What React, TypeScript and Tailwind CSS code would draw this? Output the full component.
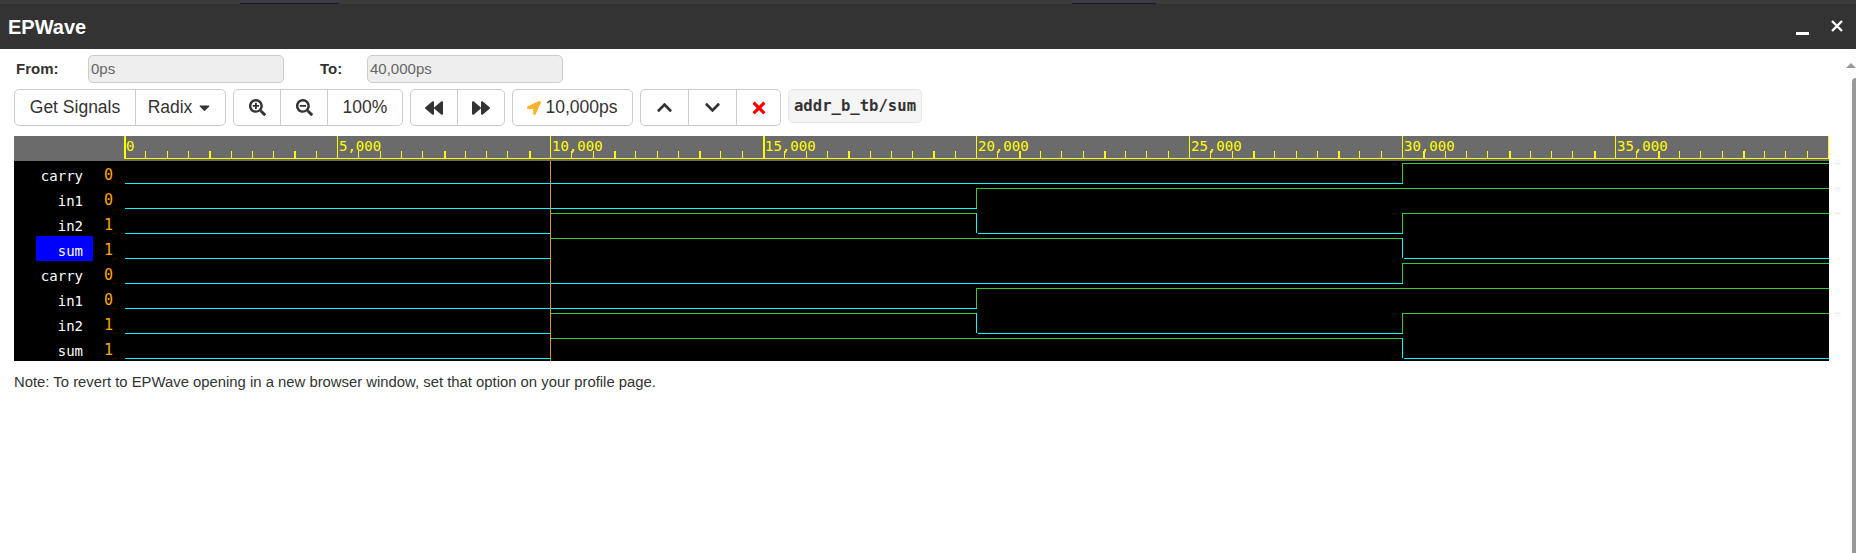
import { ReactNode } from 'react';
import {
	FaBackward,
	FaCaretDown,
	FaChevronDown,
	FaChevronUp,
	FaForward,
	FaLocationArrow,
	FaSearchMinus,
	FaSearchPlus,
	FaTimes,
} from 'react-icons/fa';

const CYAN = '#00ffff';
const GREEN = '#32cd32';
const MAJOR = 213;
const MINOR = 21.3;

// thick ticks don't fall on an even period in the picture, so they are listed
const THICK_TICKS = [4, 8, 15, 19, 23, 27, 34, 38, 42, 46, 53, 57, 61, 65, 69, 72, 76];

const signals = [
	{ name: 'carry', value: '0', edges: [[6, 1]] },
	{ name: 'in1', value: '0', edges: [[4, 1]] },
	{ name: 'in2', value: '1', edges: [[2, 1], [4, 0], [6, 1]] },
	{ name: 'sum', value: '1', edges: [[2, 1], [6, 0]], selected: true },
	{ name: 'carry', value: '0', edges: [[6, 1]] },
	{ name: 'in1', value: '0', edges: [[4, 1]] },
	{ name: 'in2', value: '1', edges: [[2, 1], [4, 0], [6, 1]] },
	{ name: 'sum', value: '1', edges: [[2, 1], [6, 0]] },
];

const Ruler = () => (
	<svg width={1706} height={25} className="block" shapeRendering="crispEdges">
		<rect x={0} y={22} width={1705} height={1} fill="#ffff00" />
		{Array.from({ length: 81 }, (_, k) => {
			if (k % 10 === 0) return null;
			const thick = THICK_TICKS.includes(k);
			return <rect key={k} x={Math.round(MINOR * k)} y={15} width={thick ? 2 : 1} height={7} fill="#ffff00" />;
		})}
		{Array.from({ length: 9 }, (_, n) => (
			<rect key={n} x={MAJOR * n} y={0} width={n === 0 || n === 3 || n === 8 ? 2 : 1} height={22} fill="#ffff00" />
		))}
		{Array.from({ length: 8 }, (_, n) => (
			<text
				key={n}
				x={MAJOR * n + 2}
				y={15}
				fill="#ffff00"
				shapeRendering="auto"
				className="font-['DejaVu_Sans_Mono',monospace] text-[14px]"
			>
				{(n * 5000).toLocaleString('en-US')}
			</text>
		))}
	</svg>
);

const Trace = ({ row, edges }: { row: number; edges: number[][] }) => {
	const high = 2 + row * 25;
	const low = 22 + row * 25;
	const parts: ReactNode[] = [];
	let from = 1;
	let level = 0;

	[...edges, [8, -1]].forEach(([at, next], i) => {
		const x = MAJOR * at;
		const end = next === -1 ? 1705 : x + 1;
		parts.push(
			<rect key={`h${i}`} x={from} y={level ? high : low} width={end - from} height={1} fill={level ? GREEN : CYAN} />,
		);
		if (next !== -1) {
			parts.push(<rect key={`v${i}`} x={x} y={high} width={1} height={20} fill={next ? GREEN : CYAN} />);
			from = next ? x : x + 2;
			level = next;
		}
	});

	return <g>{parts}</g>;
};

const Group = ({ children }: { children: ReactNode }) => (
	<div className="flex h-[37px] divide-x divide-[#ccc] rounded-[5px] border border-[#ccc] bg-white">{children}</div>
);

const Btn = ({ width, children }: { width: string; children: ReactNode }) => (
	<div className={`flex items-center justify-center ${width}`}>{children}</div>
);

const App = () => (
	<div className="flex h-[553px] flex-col overflow-hidden bg-white font-['Liberation_Sans',Arial,sans-serif] text-[#333]">
		<div className="flex h-[4px] items-end bg-[#3c3c3c]">
			<div className="ml-[240px] h-px w-[99px] bg-[#14143c]" />
			<div className="ml-[733px] h-px w-[84px] bg-[#14143c]" />
		</div>

		<div className="flex h-[45px] items-center justify-between bg-[#333] pl-[8px] pr-[13px] text-white">
			<div className="text-[20px] font-bold">EPWave</div>
			<div className="flex items-center gap-[22px]">
				<div className="mt-[13px] h-[3px] w-[13px] bg-white" />
				<svg width="12" height="12" viewBox="0 0 12 12" className="mb-[2px]">
					<path d="M1 1 L11 11 M11 1 L1 11" stroke="#fff" strokeWidth="2.4" />
				</svg>
			</div>
		</div>

		<div className="flex min-h-0 flex-1">
			<div className="min-w-0 flex-1 pl-[14px] pr-[20px]">
				<div className="mt-[6px] flex h-[28px] items-center text-[15px]">
					<div className="ml-[2px] w-[72px] font-bold">From:</div>
					<div className="flex h-[28px] w-[196px] items-center rounded-[5px] border border-[#ccc] bg-[#eee] px-[2px] text-[#666]">
						0ps
					</div>
					<div className="ml-[36px] w-[47px] font-bold">To:</div>
					<div className="flex h-[28px] w-[196px] items-center rounded-[5px] border border-[#ccc] bg-[#eee] px-[2px] text-[#666]">
						40,000ps
					</div>
				</div>

				<div className="mt-[6px] flex gap-[7px] text-[17.5px]">
					<Group>
						<Btn width="w-[121px]">Get Signals</Btn>
						<Btn width="w-[89px]">
							Radix
							<FaCaretDown className="ml-[4px] text-[17px]" />
						</Btn>
					</Group>
					<Group>
						<Btn width="w-[47px]">
							<FaSearchPlus className="text-[17px]" />
						</Btn>
						<Btn width="w-[47px]">
							<FaSearchMinus className="text-[17px]" />
						</Btn>
						<Btn width="w-[74px]">100%</Btn>
					</Group>
					<Group>
						<Btn width="w-[47px]">
							<FaBackward className="text-[18px]" />
						</Btn>
						<Btn width="w-[46px]">
							<FaForward className="text-[18px]" />
						</Btn>
					</Group>
					<Group>
						<Btn width="w-[119px]">
							<FaLocationArrow className="mr-[4px] text-[14px] text-[#fdb42c]" />
							10,000ps
						</Btn>
					</Group>
					<Group>
						<Btn width="w-[48px]">
							<FaChevronUp className="text-[17px]" />
						</Btn>
						<Btn width="w-[48px]">
							<FaChevronDown className="text-[17px]" />
						</Btn>
						<Btn width="w-[43px]">
							<FaTimes className="text-[18px] text-[#f00]" />
						</Btn>
					</Group>
					<div className="flex h-[34px] w-[134px] items-center justify-center rounded-[5px] border border-[#e6e6e6] bg-[#f5f5f5] pt-[2px] font-['DejaVu_Sans_Mono',monospace] text-[15.6px] font-bold">
						addr_b_tb/sum
					</div>
				</div>

				<div className="mt-[10px] flex h-[25px] bg-[#6b6b6b]">
					<div className="w-[110px]" />
					<Ruler />
				</div>

				<div className="flex h-[200px] bg-black">
					<div className="w-[110px] shrink-0 font-['DejaVu_Sans_Mono',monospace] text-[14px]">
						{signals.map((s, i) => (
							<div key={i} className="flex h-[25px] pl-[22px] leading-[30px]">
								<div className={`w-[57px] pr-[10px] text-right text-white ${s.selected ? 'bg-[#00f]' : ''}`}>
									{s.name}
								</div>
								<div className="w-[31px] text-center text-[15px] leading-[29px] text-[#ffa500]">{s.value}</div>
							</div>
						))}
					</div>
					<svg width={1705} height={200} className="block" shapeRendering="crispEdges">
						{signals.map((s, i) => (
							<Trace key={i} row={i} edges={s.edges} />
						))}
						<rect x={426} y={0} width={1} height={200} fill="#d8962a" />
					</svg>
				</div>

				<p className="mt-[10px] text-[14.85px]">Note: To revert to EPWave opening in a new browser window, set that option on your profile page.</p>
			</div>

			<div className="flex w-[7px] flex-col items-end bg-[#fcfcfc]">
				<div className="mt-[14px] h-0 w-0 border-x-[5px] border-b-[5px] border-x-transparent border-b-[#999]" />
				<div className="mt-[10px] w-[4px] flex-1 rounded-tl-[4px] bg-[#999]" />
			</div>
		</div>
	</div>
);

export default App;
